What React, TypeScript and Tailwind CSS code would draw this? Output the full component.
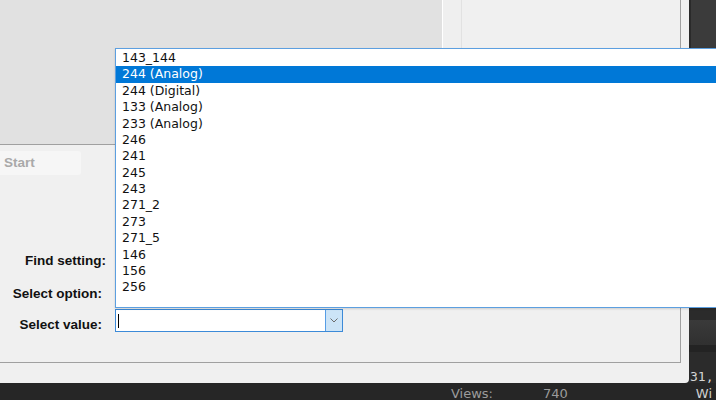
import React from 'react';

const items = [
  '143_144',
  '244 (Analog)',
  '244 (Digital)',
  '133 (Analog)',
  '233 (Analog)',
  '246',
  '241',
  '245',
  '243',
  '271_2',
  '273',
  '271_5',
  '146',
  '156',
  '256',
];

const selected = 1;

function Chevron() {
  return (
    <svg width="8" height="5" viewBox="0 0 8 5" fill="none">
      <path d="M0.5 0.5 L4 4 L7.5 0.5" stroke="#6d6d6d" strokeWidth="1" />
    </svg>
  );
}

export default function App() {
  return (
    <div className="relative w-[716px] h-[400px] overflow-hidden flex flex-col bg-[#262626] font-['Liberation_Sans',sans-serif]">
      {/* Window + dark side */}
      <div className="flex h-[388px]">
        <div className="w-[689px] h-full bg-[#f0f0f0] rounded-br-[4px] flex flex-col">
          {/* Group box */}
          <div className="w-[681px] h-[363px] border-r border-b border-[#a0a0a0] flex flex-col">
            {/* Top row */}
            <div className="h-[145px] flex">
              <div className="w-[442px] h-full bg-[#e1e1e1] border-b border-[#a0a0a0]" />
              <div className="w-px h-full bg-white" />
              <div className="w-[18px] h-full bg-[#efefef]" />
              <div className="w-px h-full bg-[#e2e2e2]" />
              <div className="flex-1 h-full bg-[#f0f0f0]" />
            </div>

            {/* Controls */}
            <div className="flex flex-col">
              <div className="mt-[6px] w-[81px] h-[24px] bg-[#f6f6f6] rounded-r-[3px] flex items-center pl-[4px] text-[13.5px] font-bold text-[#a9a9a9]">
                Start
              </div>

              <div className="mt-[75px] h-[22px] flex items-center">
                <div className="w-[106px] text-right text-[13.5px] font-bold text-[#111]">Find setting:</div>
                <div className="ml-[9px] w-[228px] h-[22px] bg-white border border-[#7a7a7a]" />
              </div>

              <div className="mt-[11px] h-[22px] flex items-center">
                <div className="w-[102px] text-right text-[13.5px] font-bold text-[#111]">Select option:</div>
                <div className="ml-[13px] w-[228px] h-[22px] bg-white border border-[#7a7a7a]" />
              </div>

              <div className="mt-[4px] h-[23px] flex">
                <div className="w-[102px] pt-[6px] text-right text-[13.5px] font-bold text-[#111]">Select value:</div>
                <div className="ml-[13px] w-[228px] h-[23px] bg-white border border-[#3c8ad8] flex">
                  <div className="flex-1 flex items-center pl-[2px]">
                    <div className="w-px h-[14px] bg-black" />
                  </div>
                  <div className="w-[17px] h-full bg-[#cce4f7] border-l border-[#569de5] flex items-center justify-center">
                    <Chevron />
                  </div>
                </div>
              </div>
            </div>
          </div>
        </div>

        {/* Dark side panel */}
        <div className="flex-1 flex flex-col">
          <div className="h-[48px] bg-[#3b3b3b] border-l-2 border-[#2a2a2a]" />
          <div className="h-[260px] bg-[#3b3b3b]" />
          <div className="h-[12px] bg-[#2b2b2b]" />
          <div className="h-[25px] bg-gradient-to-b from-[#3a3a3a] to-[#303030]" />
          <div className="h-[7px] bg-[#232323]" />
          <div className="flex-1 bg-[#2b2b2b] pt-[18px] pl-[1px] text-[13px] leading-none text-[#d4d4d4] font-['DejaVu_Sans_Mono',monospace]">
            31,
          </div>
        </div>
      </div>

      {/* Bottom strip */}
      <div className="flex-1 text-[13px] leading-none text-[#9b9b9b] font-['DejaVu_Sans',sans-serif]">
        <div className="flex pt-[4px]">
          <span className="ml-[451px]">Views:</span>
          <span className="ml-[50px]">740</span>
          <span className="ml-[128px] text-[#cfcfcf]">Wi</span>
        </div>
      </div>

      {/* Open dropdown list */}
      <div className="absolute left-[115px] top-[48px] w-[620px] h-[260px] bg-white border border-[#5c9fe0] shadow-[0_1px_2px_rgba(0,0,0,0.15)] pt-px">
        {items.map((item, i) => (
          <div
            key={item}
            className={
              i === selected
                ? 'h-[16.4px] flex items-center pl-[6px] text-[12.5px] leading-none bg-[#0078d7] text-white font-[\'DejaVu_Sans\',sans-serif]'
                : 'h-[16.4px] flex items-center pl-[6px] text-[12.5px] leading-none text-[#111] font-[\'DejaVu_Sans\',sans-serif]'
            }
          >
            {item}
          </div>
        ))}
      </div>
    </div>
  );
}
